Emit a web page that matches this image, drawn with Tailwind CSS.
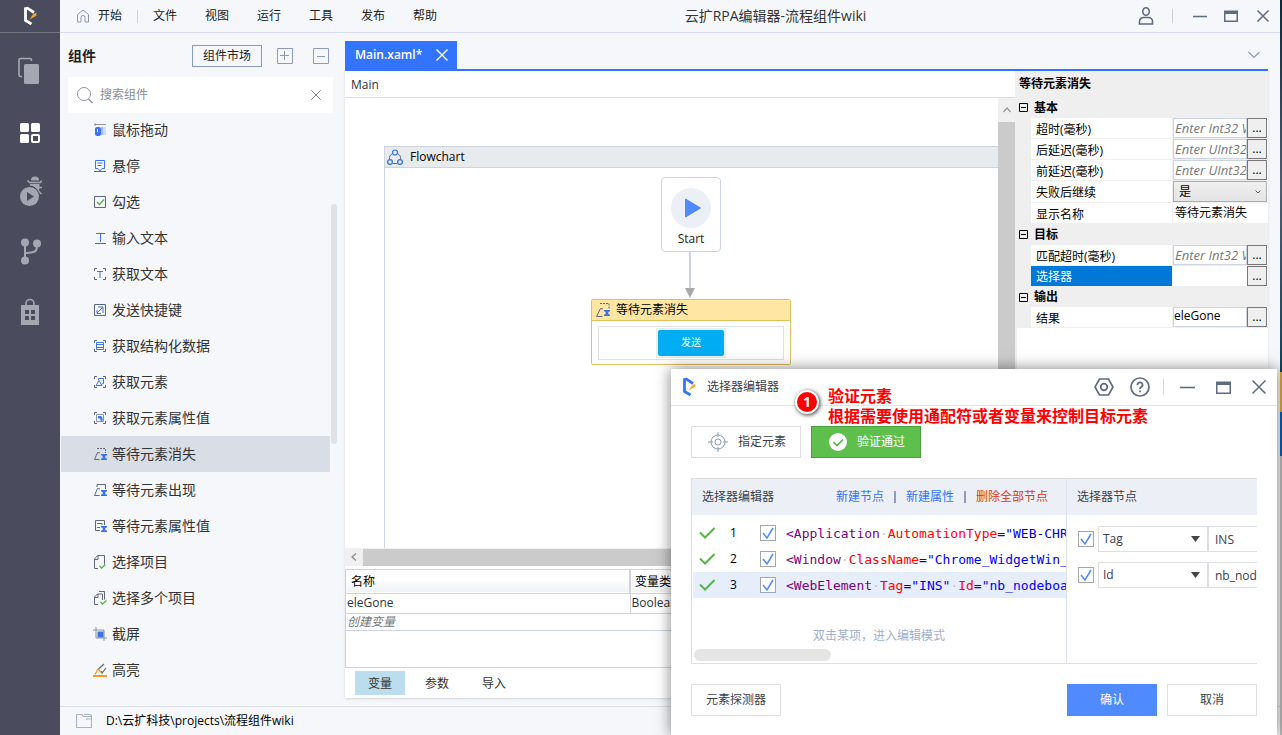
<!DOCTYPE html>
<html lang="zh-CN">
<head>
<meta charset="utf-8">
<title>云扩RPA编辑器-流程组件wiki</title>
<script src="https://cdn.jsdelivr.net/npm/@tailwindcss/browser@4"></script>
</head>
<body class="relative flex h-screen overflow-hidden bg-[#f5f7fb] font-['Open_Sans','Noto_Sans_CJK_SC',sans-serif] text-xs text-[#222]">

<!-- Shared symbols -->
<svg class="hidden">
  <symbol id="logo" viewBox="0 0 16 20"><path d="M12 6.500L5.500 2.200L3.500 2.600V14.500L9.500 18" fill="none" stroke="currentColor" stroke-width="2.800"/><path d="M14.300 6.500v3.300L7.500 13.500l3.500-5z" fill="#f6ab2f"/></symbol>
  <symbol id="close" viewBox="0 0 14 14"><path d="M1.500 1.500l11 11M12.500 1.500l-11 11" fill="none" stroke="currentColor"/></symbol>
  <symbol id="tick" viewBox="0 0 16 16"><path d="M3 8l4 5 6-10" fill="none" stroke="#4f8bff" stroke-width="1.500"/></symbol>
  <symbol id="ok" viewBox="0 0 16 12"><path d="M1 5.500l5 5L15.500 1" fill="none" stroke="#55b845" stroke-width="2"/></symbol>
  <symbol id="hourglass" viewBox="0 0 14 14"><path d="M8 7h6v1.500h-1l-1 1.500 1 1.500h1V13H8v-1.500h1l1-1.500-1-1.500H8z" fill="#3c74e8"/></symbol>
  <symbol id="corners" viewBox="0 0 14 14"><path d="M1.500 4V1.500H4M10 1.500h2.500V4M12.500 10v2.500H10M4 12.500H1.500V10" fill="none" stroke="#5d6880"/></symbol>
</svg>

<nav class="flex w-[60px] shrink-0 flex-col bg-[#4a4c5e] text-[#a4a7b1]" aria-label="侧栏">
  <div class="flex h-[33px] items-center justify-center border-b border-[#72747f] text-white">
    <svg class="h-5 w-4"><use href="#logo"/></svg>
  </div>
  <div class="flex flex-col pt-2">
    <button class="flex h-[60px] items-center justify-center" aria-label="文件"><svg class="h-7 w-6" viewBox="0 0 24 28"><path d="M4 19.500H2.500a1.500 1.500 0 0 1-1.500-1.500V3a1.500 1.500 0 0 1 1.500-1.500H12A1.500 1.500 0 0 1 13.500 3v1" fill="none" stroke="currentColor" stroke-width="1.600"/><rect x="6" y="7" width="15" height="20" rx="1.500" fill="currentColor"/></svg></button>
    <button class="flex h-[60px] items-center justify-center pt-1 text-white" aria-label="组件"><svg class="size-5" viewBox="0 0 20 20"><rect width="9" height="9" rx="1.500" fill="currentColor"/><rect x="11" width="9" height="9" rx="1.500" fill="currentColor"/><rect y="11" width="9" height="9" rx="1.500" fill="currentColor"/><rect x="12" y="12" width="7" height="7" rx="1" fill="none" stroke="currentColor" stroke-width="2"/></svg></button>
    <button class="flex h-[60px] items-center justify-center" aria-label="调试"><svg class="h-[30px] w-6" viewBox="0 0 24 30"><path d="M13 4.500a4 4 0 0 1 8 0z" fill="currentColor"/><path d="M9.500 4.500l2 2h11l1-2" fill="none" stroke="currentColor" stroke-width="1.600"/><path d="M12 8h9.500c0 4 0 7-1.500 9.500C19.500 13 16 10 12 9.500z" fill="currentColor"/><path d="M20 11.500h4M20 14.500l3.500 3.500" fill="none" stroke="currentColor" stroke-width="1.500"/><circle cx="11.500" cy="20.500" r="10.500" fill="#4a4c5e"/><circle cx="11.500" cy="20.500" r="9.500" fill="currentColor"/><path d="M9 16v9l7-4.500z" fill="#4a4c5e"/></svg></button>
    <button class="flex h-[60px] items-center justify-center" aria-label="版本"><svg class="h-7 w-6" viewBox="0 0 24 28"><g fill="currentColor"><circle cx="7" cy="5.500" r="4"/><circle cx="19" cy="6.500" r="4"/><circle cx="7" cy="23.500" r="4"/></g><path d="M7 5v18M7 16c6-1 12 1 12-7" fill="none" stroke="currentColor" stroke-width="2"/></svg></button>
    <button class="flex h-[60px] items-center justify-center pt-[2px]" aria-label="市场"><svg class="h-7 w-5" viewBox="0 0 20 28"><path d="M6 8V5.500a4 4 0 0 1 8 0V8" fill="none" stroke="currentColor" stroke-width="1.600"/><path fill="currentColor" fill-rule="evenodd" d="M1 7h18v20H1zM5 12v4h4v-4zM11 12v4h4v-4zM5 18v4h4v-4zM11 18v4h4v-4z"/></svg></button>
  </div>
</nav>

<div class="flex min-w-0 flex-1 flex-col">
  <header class="flex h-[33px] shrink-0 items-center border-b border-[#d8dde8] pl-4 pr-[10px]">
    <svg class="mr-2 size-[14px] text-[#8795b5]" viewBox="0 0 14 14"><path d="M1.500 13V5.500L7 1l5.500 4.500V13H9V8.500a2 2 0 0 0-4 0V13z" fill="none" stroke="currentColor"/></svg>
    <button class="pr-[15px]">开始</button>
    <span class="h-[13px] w-px bg-[#d0d3da]"></span>
    <div class="flex gap-7 pl-[15px]"><button>文件</button><button>视图</button><button>运行</button><button>工具</button><button>发布</button><button>帮助</button></div>
    <h1 class="flex-1 text-center text-sm text-[#333]">云扩RPA编辑器-流程组件wiki</h1>
    <div class="flex items-center pl-6 text-[#5f6b82]">
      <button aria-label="用户"><svg class="h-[18px] w-4" viewBox="0 0 16 18"><ellipse cx="8" cy="4.500" rx="3.200" ry="3.700" fill="none" stroke="currentColor" stroke-width="1.600"/><path d="M1.500 17v-2.500a4 4 0 0 1 4-4h5a4 4 0 0 1 4 4V17z" fill="none" stroke="currentColor" stroke-width="1.600"/></svg></button>
      <span class="ml-[18px] mr-5 h-[14px] w-px bg-[#cfd3db]"></span>
      <button aria-label="最小化"><svg class="size-[14px]" viewBox="0 0 14 14"><path d="M0 7.500h14" stroke="currentColor" stroke-width="1.500"/></svg></button>
      <button class="ml-[17px]" aria-label="最大化"><svg class="size-[14px]" viewBox="0 0 14 14"><path d="M0 1.500h14v11.500H0zM1.500 5v6.500h11V5z" fill="currentColor" fill-rule="evenodd"/></svg></button>
      <button class="ml-[18px]" aria-label="关闭"><svg class="size-[14px]" viewBox="0 0 14 14"><path d="M1.500 1.500l11 11M12.500 1.500l-11 11" fill="none" stroke="currentColor" stroke-width="1.500"/></svg></button>
    </div>
  </header>

  <div class="flex min-h-0 flex-1">
    <!-- Component library -->
    <aside class="flex w-[285px] shrink-0 flex-col pt-3">
      <div class="flex h-[22px] items-center pl-2 pr-4">
        <h2 class="flex-1 text-sm font-bold">组件</h2>
        <button class="h-[22px] w-[70px] border border-[#8b9bbd]">组件市场</button>
        <button class="ml-[15px] text-[#8b9bbd]" aria-label="展开"><svg class="size-4" viewBox="0 0 16 16"><path d="M.5.5h15v15H.5zM7.500 3v9M3 7.500h9" fill="none" stroke="currentColor"/></svg></button>
        <button class="ml-5 text-[#8b9bbd]" aria-label="折叠"><svg class="size-4" viewBox="0 0 16 16"><path d="M.5.5h15v15H.5zM4 8.500h8" fill="none" stroke="currentColor"/></svg></button>
      </div>
      <label class="ml-2 mr-3 mt-[10px] flex h-9 shrink-0 items-center bg-white px-2 text-[#8f949e]">
        <svg class="size-[18px]" viewBox="0 0 18 18"><circle cx="8" cy="8" r="6.500" fill="none" stroke="currentColor"/><path d="M12.500 13l4 4" stroke="currentColor" stroke-width="1.500"/></svg>
        <input class="ml-[6px] min-w-0 flex-1 outline-none placeholder:text-[#8a8d93]" placeholder="搜索组件" aria-label="搜索组件">
        <svg class="mr-[3px] size-3 text-[#6b7486]"><use href="#close"/></svg>
      </label>
      <div class="flex min-h-0 flex-1">
        <ul class="mx-px flex-1 overflow-hidden text-sm text-[#333]">
          <li class="-mt-px flex h-9 items-center gap-[5px] pl-8"><svg class="size-[14px]" viewBox="0 0 14 14"><path d="M2 1.500h11M2 0v3" stroke="#8a93a6"/><rect x="2" y="4" width="6" height="9" rx="2" fill="#3c74e8"/><path d="M4.500 6v3" stroke="#fff"/><path d="M8 4h2.500v8H8z" fill="#9db8f2"/><path d="M10.500 4H13v8h-2.500z" fill="#d0dcf8"/></svg>鼠标拖动</li>
          <li class="flex h-9 items-center gap-[5px] pl-8"><svg class="size-[14px]" viewBox="0 0 14 14"><path d="M2.500 1.500h9v8H9L7 12 5 9.500H2.500zM4.500 4h5M4.500 6.500h4" fill="none" stroke="#3c74e8"/><path d="M1 12.500h12" stroke="#5d6880"/></svg>悬停</li>
          <li class="flex h-9 items-center gap-[5px] pl-8"><svg class="size-[14px]" viewBox="0 0 14 14"><path d="M1.500 1.500h11v11h-11z" fill="none" stroke="#5d6880"/><path d="M4 7l2.500 2.500L11 4.500" fill="none" stroke="#55b845" stroke-width="1.300"/></svg>勾选</li>
          <li class="flex h-9 items-center gap-[5px] pl-8"><svg class="size-[14px]" viewBox="0 0 14 14"><path d="M3 2.500h9M7.500 2.500V11" stroke="#3c74e8"/><path d="M2 12.500h11" stroke="#5d6880"/></svg>输入文本</li>
          <li class="flex h-9 items-center gap-[5px] pl-8"><svg class="size-[14px]" viewBox="0 0 14 14"><use href="#corners"/><path d="M4 4.500h6M7 4.500V11" stroke="#3c74e8"/></svg>获取文本</li>
          <li class="flex h-9 items-center gap-[5px] pl-8"><svg class="size-[14px]" viewBox="0 0 14 14"><path d="M1.500 1.500h11v11h-11z" fill="none" stroke="#5d6880"/><path d="M5 4h5v6M10 4L4 10M4 7v3.500h4" fill="none" stroke="#3c74e8"/></svg>发送快捷键</li>
          <li class="flex h-9 items-center gap-[5px] pl-8"><svg class="size-[14px]" viewBox="0 0 14 14"><use href="#corners"/><path d="M3.500 3.500h7v7h-7zM3.500 5.500h7M3.500 8.500h7" fill="none" stroke="#3c74e8"/></svg>获取结构化数据</li>
          <li class="flex h-9 items-center gap-[5px] pl-8"><svg class="size-[14px]" viewBox="0 0 14 14"><use href="#corners"/><path d="M5.500 5V3.500h5v5L9 9M3 10.500l3-5 3 5z" fill="none" stroke="#3c74e8"/></svg>获取元素</li>
          <li class="flex h-9 items-center gap-[5px] pl-8"><svg class="size-[14px]" viewBox="0 0 14 14"><use href="#corners"/><path d="M3.500 3.500h7v7h-7z" fill="none" stroke="#8a93a6"/><path d="M5 5h3l1.500 2v3H8L7 7.500H5z" fill="#3c74e8"/></svg>获取元素属性值</li>
          <li class="flex h-9 items-center gap-[5px] bg-[#d9dde6] pl-8"><svg class="size-[14px]" viewBox="0 0 14 14"><path d="M4 1.500h8.500V6" fill="none" stroke="#5d6880" stroke-dasharray="2 1"/><path d="M6.500 12.500h-5l3-7L7 6" fill="none" stroke="#5d6880"/><use href="#hourglass"/></svg>等待元素消失</li>
          <li class="flex h-9 items-center gap-[5px] pl-8"><svg class="size-[14px]" viewBox="0 0 14 14"><path d="M4 4V1.500h8.500V6M6.500 12.500h-5l3-7L7 6" fill="none" stroke="#5d6880"/><use href="#hourglass"/></svg>等待元素出现</li>
          <li class="flex h-9 items-center gap-[5px] pl-8"><svg class="size-[14px]" viewBox="0 0 14 14"><path d="M7 11.500H2.500v-10h9V6" fill="none" stroke="#5d6880"/><path d="M4 4.500h5V6M4 8.500h3" fill="none" stroke="#3c74e8"/><use href="#hourglass"/></svg>等待元素属性值</li>
          <li class="flex h-9 items-center gap-[5px] pl-8"><svg class="size-[14px]" viewBox="0 0 14 14"><path d="M5 13.500H1.500V4l3-3.500h7v9M1.500 4.500h3.500V1" fill="none" stroke="#5d6880"/><path d="M6.500 11l2 2L12.500 9.500" fill="none" stroke="#55b845" stroke-width="1.300"/></svg>选择项目</li>
          <li class="flex h-9 items-center gap-[5px] pl-8"><svg class="size-[14px]" viewBox="0 0 14 14"><path d="M5 13.500H1.500V6l3-3h5v6M1.500 6.500H5V3M6 .5h5.500v8" fill="none" stroke="#5d6880"/><path d="M7.500 11l2 2L13.500 9.500" fill="none" stroke="#55b845" stroke-width="1.300"/></svg>选择多个项目</li>
          <li class="flex h-9 items-center gap-[5px] pl-8"><svg class="size-[14px]" viewBox="0 0 14 14"><path d="M0 3h11v11M3 0v11h11" fill="none" stroke="#8a93a6"/><path d="M4.500 4.500h6v6h-6z" fill="#3c74e8"/></svg>截屏</li>
          <li class="flex h-9 items-center gap-[5px] pl-8"><svg class="size-[14px]" viewBox="0 0 14 14"><path d="M0 13h14" stroke="#f0a020" stroke-width="2"/><path d="M2 11.500l3-5.500 4.500 5" fill="none" stroke="#f0a020" stroke-width="1.300"/><path d="M5.500 6l5.500-5M8 8.500l1.500 1L13 5" fill="none" stroke="#5d6880" stroke-width="1.200"/></svg>高亮</li>
        </ul>
        <div class="mr-[8px] mt-[91px] h-60 w-[6px] shrink-0 rounded-full bg-[#dfe1e4]"></div>
      </div>
    </aside>

    <!-- Editor -->
    <main class="mb-2 mr-3 flex min-w-0 flex-1 flex-col pt-2">
      <div class="flex h-7 shrink-0 items-center justify-between">
        <div class="flex h-7 w-28 items-center justify-between bg-[#3374ff] pl-[10px] pr-2 font-semibold text-white">Main.xaml*<button aria-label="关闭标签"><svg class="size-[14px]" viewBox="0 0 14 14"><path d="M1.500 1.500l11 11M12.500 1.500l-11 11" fill="none" stroke="currentColor" stroke-width="1.400"/></svg></button></div>
        <button class="pr-2 text-[#8b9bbd]" aria-label="更多标签"><svg class="h-2 w-3" viewBox="0 0 12 8"><path d="M.5 1L6 6.500 11.500 1" fill="none" stroke="currentColor" stroke-width="1.200"/></svg></button>
      </div>
      <div class="flex min-h-0 flex-1 border-t-2 border-[#3374ff] bg-white shadow-sm">
        <section class="flex min-w-0 flex-1 flex-col">
          <div class="flex h-[27px] shrink-0 items-center border-b border-[#d8dce8] pl-[6px] pt-px text-[#2c3240]">Main</div>
          <div class="flex min-h-0 flex-1">
            <div class="flex min-w-0 flex-1 flex-col pl-[39px] pt-12">
              <div class="flex min-h-0 flex-1 flex-col border-l border-t border-[#cdd3e0]">
                <div class="flex h-[21px] shrink-0 items-center gap-[7px] border-b border-[#cdd3e0] bg-[#e7ebee] pb-px pl-[2px] text-black">
                  <svg class="size-4" viewBox="0 0 16 16"><path d="M5.500 4.500C3 6 2 8 2.500 10M10.500 4.500C13 6 14 8 13.500 10M6 14.500h4" fill="none" stroke="#5d6880"/><g fill="#e7ebee" stroke="#2c74e0" stroke-width="1.200"><circle cx="8" cy="3.500" r="2.500"/><circle cx="3" cy="13" r="2.400"/><circle cx="13" cy="13" r="2.400"/></g></svg>Flowchart
                </div>
                <div class="relative min-h-0 flex-1">
                  <div class="absolute left-[276px] top-[9px] flex h-[75px] w-[60px] flex-col items-center rounded border border-[#cdd3e0] bg-white pt-[10px]">
                    <svg class="size-10" viewBox="0 0 40 40"><circle cx="20" cy="20" r="20" fill="#eceff5"/><path d="M14.500 11v18L29.500 20z" fill="#4f8bff" stroke="#4f8bff" stroke-linejoin="round"/></svg>
                    <span class="leading-[22px]">Start</span>
                  </div>
                  <svg class="absolute left-[300px] top-[84px] h-[47px] w-[10px]" viewBox="0 0 10 47"><path d="M5 0v38" stroke="#cdd3e0" stroke-width="2"/><path d="M0 36h10L5 46z" fill="#a8a8a8"/></svg>
                  <div class="absolute left-[206px] top-[131px] w-[200px] rounded-xs border border-[#e5c15c] bg-white">
                    <div class="flex h-[21px] items-center gap-[6px] border-b border-[#e5c15c] bg-[#ffe6a2] pb-px pl-1 text-black"><svg class="size-[14px]" viewBox="0 0 14 14"><path d="M4 .5h9V6" fill="none" stroke="#5d6880" stroke-dasharray="2 1"/><path d="M6.500 13.500H.5l4-8L7 6" fill="none" stroke="#5d6880"/><use href="#hourglass"/></svg>等待元素消失</div>
                    <div class="mx-[6px] mb-1 mt-[5px] flex h-[34px] items-center justify-center border border-[#dfe1e6]"><span class="border-2 border-[#e6f0f2]"><span class="flex h-[26px] w-[66px] items-center justify-center rounded-xs bg-[#00adf2] text-[10px] text-white">发送</span></span></div>
                  </div>
                </div>
              </div>
            </div>
            <div class="flex w-[17px] shrink-0 flex-col bg-[#f0f0f0]">
              <div class="flex h-6 items-center justify-center"><svg class="h-[6px] w-2" viewBox="0 0 8 6"><path d="M.5 5L4 1l3.500 4" fill="none" stroke="#999" stroke-width="1.200"/></svg></div>
              <div class="flex-1 bg-[#cbcbcb]"></div>
            </div>
          </div>
          <div class="flex h-[18px] shrink-0 items-center bg-[#f0f0f0]">
            <div class="flex w-[18px] justify-center"><svg class="h-2 w-[6px]" viewBox="0 0 6 8"><path d="M5 .5L1 4l4 3.500" fill="none" stroke="#888" stroke-width="1.200"/></svg></div>
            <div class="h-[17px] flex-1 bg-[#cbcbcb]"></div>
          </div>
          <div class="mt-[3px] h-[99px] shrink-0 border border-[#cdd3e0]">
            <table class="w-full table-fixed text-left">
              <thead><tr class="h-[23px] border-b border-[#cdd3e0] bg-linear-to-b from-white from-40% to-[#f0f2f4] text-black"><th class="w-[284px] border-r-2 border-[#cdd3e0] pl-[5px] pt-px font-normal">名称</th><th class="pl-1 pt-px font-normal">变量类型</th></tr></thead>
              <tbody>
                <tr class="h-[20px] border-b border-[#cdd3e0] text-[#2c3240]"><td class="border-r border-[#cdd3e0] pl-px">eleGone</td><td class="pl-px">Boolean</td></tr>
                <tr class="h-[17px] border-b border-[#cdd3e0] leading-4 text-[#777]"><td class="pl-px italic" colspan="2">创建变量</td></tr>
              </tbody>
            </table>
          </div>
          <div class="flex h-[30px] shrink-0 items-center gap-[7px] px-[10px] text-[#333]">
            <button class="h-6 w-[50px] bg-[#bbdded] pt-px">变量</button><button class="h-6 w-[50px] pt-px">参数</button><button class="h-6 w-[50px] pt-px">导入</button>
          </div>
        </section>

        <!-- Properties -->
        <section class="flex w-[253px] shrink-0 flex-col border-l-2 border-[#efefef] text-black">
          <h3 class="flex h-[26px] shrink-0 items-center bg-[#efefef] pb-px pl-[2px] font-bold">等待元素消失</h3>
          <div class="flex h-[21px] shrink-0 items-center gap-[6px] bg-[#efefef] pl-[2px] font-bold"><svg class="size-[9px]" viewBox="0 0 9 9"><path d="M.5.5h8v8h-8zM2 4.500h5" fill="none" stroke="#000"/></svg>基本</div>
          <div class="flex h-[21px] shrink-0 border-b border-l-[14px] border-[#efefef]"><label for="p1" class="w-[142px] border-r border-[#efefef] pl-[5px] leading-6">超时(毫秒)</label><input id="p1" class="w-[74px] border border-[#cdd3e0] pl-px text-[13px] italic leading-4 placeholder:text-[#777]" placeholder="Enter Int32 VB"><button class="w-5 border border-[#777] bg-[#efefef] leading-4">...</button></div>
          <div class="flex h-[21px] shrink-0 border-b border-l-[14px] border-[#efefef]"><label for="p2" class="w-[142px] border-r border-[#efefef] pl-[5px] leading-6">后延迟(毫秒)</label><input id="p2" class="w-[74px] border border-[#cdd3e0] pl-px text-[13px] italic leading-4 placeholder:text-[#777]" placeholder="Enter UInt32 VB"><button class="w-5 border border-[#777] bg-[#efefef] leading-4">...</button></div>
          <div class="flex h-[21px] shrink-0 border-b border-l-[14px] border-[#efefef]"><label for="p3" class="w-[142px] border-r border-[#efefef] pl-[5px] leading-6">前延迟(毫秒)</label><input id="p3" class="w-[74px] border border-[#cdd3e0] pl-px text-[13px] italic leading-4 placeholder:text-[#777]" placeholder="Enter UInt32 VB"><button class="w-5 border border-[#777] bg-[#efefef] leading-4">...</button></div>
          <div class="flex h-[22px] shrink-0 border-b border-l-[14px] border-[#efefef]"><label for="p4" class="w-[142px] border-r border-[#efefef] pl-[5px] leading-6">失败后继续</label><div class="grid w-[94px] items-center"><select id="p4" class="col-start-1 row-start-1 h-[21px] appearance-none border border-[#acacac] bg-linear-to-b from-[#efefef] to-[#e4e4e4] pl-[5px]"><option>是</option></select><svg class="pointer-events-none col-start-1 row-start-1 mr-[6px] h-1 w-[6px] justify-self-end" viewBox="0 0 6 4"><path d="M.5.5L3 3 5.500.5" fill="none" stroke="#555"/></svg></div></div>
          <div class="flex h-[21px] shrink-0 border-b border-l-[14px] border-[#efefef]"><label for="p5" class="w-[142px] border-r border-[#efefef] pl-[5px] leading-6">显示名称</label><input id="p5" class="w-[94px] pl-[2px] leading-4" value="等待元素消失"></div>
          <div class="flex h-[21px] shrink-0 items-center gap-[6px] bg-[#efefef] pl-[2px] font-bold"><svg class="size-[9px]" viewBox="0 0 9 9"><path d="M.5.5h8v8h-8zM2 4.500h5" fill="none" stroke="#000"/></svg>目标</div>
          <div class="flex h-[21px] shrink-0 border-b border-l-[14px] border-[#efefef]"><label for="p6" class="w-[142px] border-r border-[#efefef] pl-[5px] leading-6">匹配超时(毫秒)</label><input id="p6" class="w-[74px] border border-[#cdd3e0] pl-px text-[13px] italic leading-4 placeholder:text-[#777]" placeholder="Enter Int32 VB"><button class="w-5 border border-[#777] bg-[#efefef] leading-4">...</button></div>
          <div class="flex h-[21px] shrink-0 border-b border-l-[14px] border-[#efefef]"><label for="p7" class="w-[142px] border-r border-[#efefef] bg-[#0078d7] pl-[5px] leading-[22px] text-white">选择器</label><input id="p7" class="w-[74px] pl-px"><button class="w-5 border border-[#777] bg-[#efefef] leading-4">...</button></div>
          <div class="flex h-5 shrink-0 items-center gap-[6px] bg-[#efefef] pl-[2px] font-bold"><svg class="size-[9px]" viewBox="0 0 9 9"><path d="M.5.5h8v8h-8zM2 4.500h5" fill="none" stroke="#000"/></svg>输出</div>
          <div class="flex h-[21px] shrink-0 border-b border-l-[14px] border-[#efefef]"><label for="p8" class="w-[142px] border-r border-[#efefef] pl-[5px] leading-6">结果</label><input id="p8" class="w-[74px] border border-[#cdd3e0] pb-[2px] leading-4" value="eleGone"><button class="w-5 border border-[#777] bg-[#efefef] leading-4">...</button></div>
        </section>
      </div>
    </main>
  </div>

  <footer class="flex h-[29px] shrink-0 items-center border-t border-[#dcdfe6] pl-4 text-black">
    <svg class="mr-[14px] size-4" viewBox="0 0 16 16"><path d="M.5 14.500v-13h5.500l1.500 2h8v11zM8 1.500h5.500a2 2 0 0 1 2 2V6H10" fill="none" stroke="#a9b3c6" stroke-width="1.200"/></svg>D:\云扩科技\projects\流程组件wiki
  </footer>
</div>

<!-- Desktop visible beside the window -->
<div class="flex w-[2px] shrink-0 flex-col">
  <div class="h-[372px] bg-linear-to-b from-[#0b2838] via-[#4f5c6c] to-[#0c4257]"></div><div class="h-[40px] bg-[#d9a846]"></div><div class="h-11 bg-[#0c5cb5]"></div><div class="flex-1 bg-[#bdbdbd]"></div>
</div>

<!-- Selector editor dialog -->
<div role="dialog" aria-label="选择器编辑器" class="absolute bottom-0 left-[671px] right-[5px] top-[369px] flex flex-col bg-white text-[#3b404c] shadow-[0_0_14px_rgba(0,0,0,0.5)]">
  <div class="flex h-[37px] shrink-0 items-center border-b border-[#e0e4ee] pl-[10px] pr-[10px] text-[#5f6b82]">
    <svg class="mr-[10px] h-5 w-4 text-[#3374ff]"><use href="#logo"/></svg>
    <h2 class="flex-1 text-[#3b404c]">选择器编辑器</h2>
    <button aria-label="设置"><svg class="size-5" viewBox="0 0 20 20"><path d="M5.500 2h9l4.500 8-4.500 8h-9L1 10z" fill="none" stroke="currentColor" stroke-width="1.700"/><circle cx="10" cy="10" r="3.300" fill="none" stroke="currentColor" stroke-width="1.700"/></svg></button>
    <button class="ml-4" aria-label="帮助"><svg class="size-5" viewBox="0 0 20 20"><circle cx="10" cy="10" r="9" fill="none" stroke="currentColor" stroke-width="1.700"/><path d="M7.500 8a2.500 2.500 0 1 1 3.700 2.100c-.8.5-1.200.8-1.200 1.900M10 13.500v1.800" fill="none" stroke="currentColor" stroke-width="1.800"/></svg></button>
    <span class="ml-[13px] mr-4 h-4 w-px bg-[#d5d9e0]"></span>
    <button aria-label="最小化"><svg class="h-4 w-[15px]" viewBox="0 0 15 16"><path d="M0 8.500h15" stroke="currentColor" stroke-width="1.600"/></svg></button>
    <button class="ml-[21px]" aria-label="最大化"><svg class="h-4 w-[15px]" viewBox="0 0 15 16"><path d="M0 2.500h15V15H0zM1.500 6v7.500h12V6z" fill="currentColor" fill-rule="evenodd"/></svg></button>
    <button class="ml-5" aria-label="关闭"><svg class="size-4" viewBox="0 0 16 16"><path d="M1.500 1.500l13 13M14.500 1.500l-13 13" fill="none" stroke="currentColor" stroke-width="1.500"/></svg></button>
  </div>
  <div class="flex flex-1 flex-col px-5 pt-5">
    <div class="flex gap-[10px]">
      <button class="flex h-8 w-[110px] items-center justify-center gap-[10px] border border-[#dedfe2] pl-[2px]"><svg class="size-5 text-[#8b9bbd]" viewBox="0 0 20 20"><circle cx="10" cy="10" r="7" fill="none" stroke="currentColor"/><circle cx="10" cy="10" r="3" fill="none" stroke="currentColor"/><path d="M10 0v5M10 15v5M0 10h5M15 10h5" stroke="currentColor"/></svg>指定元素</button>
      <button class="flex h-8 w-[110px] items-center justify-center gap-[10px] border border-[#46a13a] bg-[#5fbf4d] pl-[2px] text-white"><svg class="size-[18px]" viewBox="0 0 18 18"><circle cx="9" cy="9" r="9" fill="#fff"/><path d="M4.500 9l3.500 3.500L14 6.500" fill="none" stroke="#55b845" stroke-width="1.600"/></svg>验证通过</button>
    </div>
    <div class="mt-5 flex h-[186px] border-y border-l border-[#dedfe2]">
      <section class="flex w-[375px] shrink-0 flex-col border-r border-[#dbe2f0]">
        <div class="flex h-9 shrink-0 items-center bg-[#eceff5] pl-[10px] pr-[18px]">
          <h3 class="flex-1">选择器编辑器</h3>
          <button class="text-[#3374ff]">新建节点</button><span class="mx-[10px] h-3 w-[2px] bg-[#8f9bb8]"></span><button class="text-[#3374ff]">新建属性</button><span class="mx-[10px] h-3 w-[2px] bg-[#8f9bb8]"></span><button class="text-[#e03a10]">删除全部节点</button>
        </div>
        <div class="flex flex-col pl-px pt-[5px] text-[13px] text-black">
          <div class="flex h-[26px] items-center pl-[6px]"><svg class="h-3 w-4"><use href="#ok"/></svg><span class="ml-[15px] w-5 text-xs">1</span><span class="ml-[10px] grid size-4 shrink-0"><input type="checkbox" checked aria-label="节点 1" class="col-start-1 row-start-1 size-4 appearance-none border border-[#a3a6ad]"><svg class="pointer-events-none col-start-1 row-start-1 size-4"><use href="#tick"/></svg></span><code class="ml-[10px] flex-1 overflow-hidden whitespace-nowrap pt-px font-['DejaVu_Sans_Mono',monospace] text-[#0000f0]"><span class="text-[#800080]">&lt;Application</span><span class="text-[#c8c8c8]">·</span><span class="text-[#f00]">AutomationType</span>="WEB-CHR</code></div>
          <div class="flex h-[26px] items-center pl-[6px]"><svg class="h-3 w-4"><use href="#ok"/></svg><span class="ml-[15px] w-5 text-xs">2</span><span class="ml-[10px] grid size-4 shrink-0"><input type="checkbox" checked aria-label="节点 2" class="col-start-1 row-start-1 size-4 appearance-none border border-[#a3a6ad]"><svg class="pointer-events-none col-start-1 row-start-1 size-4"><use href="#tick"/></svg></span><code class="ml-[10px] flex-1 overflow-hidden whitespace-nowrap pt-px font-['DejaVu_Sans_Mono',monospace] text-[#0000f0]"><span class="text-[#800080]">&lt;Window</span><span class="text-[#c8c8c8]">·</span><span class="text-[#f00]">ClassName</span>="Chrome_WidgetWin_</code></div>
          <div class="flex h-[26px] items-center bg-[#e6edfb] pl-[6px]"><svg class="h-3 w-4"><use href="#ok"/></svg><span class="ml-[15px] w-5 text-xs">3</span><span class="ml-[10px] grid size-4 shrink-0"><input type="checkbox" checked aria-label="节点 3" class="col-start-1 row-start-1 size-4 appearance-none border border-[#a3a6ad] bg-white"><svg class="pointer-events-none col-start-1 row-start-1 size-4"><use href="#tick"/></svg></span><code class="ml-[10px] flex-1 overflow-hidden whitespace-nowrap pt-px font-['DejaVu_Sans_Mono',monospace] text-[#0000f0]"><span class="text-[#800080]">&lt;WebElement</span><span class="text-[#c8c8c8]">·</span><span class="text-[#f00]">Tag</span>="INS"<span class="text-[#c8c8c8]">·</span><span class="text-[#f00]">Id</span>="nb_nodeboa</code></div>
        </div>
        <p class="mt-auto pb-[5px] text-center text-[#a3b0ca]">双击某项，进入编辑模式</p>
        <div class="mb-[2px] ml-[2px] h-3 w-[137px] rounded-full bg-[#e5e5e5]"></div>
      </section>
      <section class="flex min-w-0 flex-1 flex-col overflow-hidden">
        <h3 class="flex h-9 shrink-0 items-center bg-[#eceff5] pl-[10px]">选择器节点</h3>
        <div class="flex flex-col gap-[10px] pl-[11px] pt-[11px]">
          <div class="flex h-[26px] items-center"><span class="mr-1 grid size-4 shrink-0"><input type="checkbox" checked aria-label="Tag" class="col-start-1 row-start-1 size-4 appearance-none border border-[#a3a6ad]"><svg class="pointer-events-none col-start-1 row-start-1 size-4"><use href="#tick"/></svg></span><span class="grid w-[110px] shrink-0 items-center"><select aria-label="属性 1" class="col-start-1 row-start-1 h-[26px] appearance-none border border-[#dedfe2] pl-1"><option>Tag</option></select><svg class="pointer-events-none col-start-1 row-start-1 mr-2 h-[6px] w-[9px] justify-self-end" viewBox="0 0 9 6"><path d="M0 0h9L4.500 6z" fill="#444"/></svg></span><input aria-label="值 1" class="h-[26px] w-0 flex-1 border-y border-l border-[#dedfe2] pl-[6px]" value="INS"></div>
          <div class="flex h-[26px] items-center"><span class="mr-1 grid size-4 shrink-0"><input type="checkbox" checked aria-label="Id" class="col-start-1 row-start-1 size-4 appearance-none border border-[#a3a6ad]"><svg class="pointer-events-none col-start-1 row-start-1 size-4"><use href="#tick"/></svg></span><span class="grid w-[110px] shrink-0 items-center"><select aria-label="属性 2" class="col-start-1 row-start-1 h-[26px] appearance-none border border-[#dedfe2] pl-1"><option>Id</option></select><svg class="pointer-events-none col-start-1 row-start-1 mr-2 h-[6px] w-[9px] justify-self-end" viewBox="0 0 9 6"><path d="M0 0h9L4.500 6z" fill="#444"/></svg></span><input aria-label="值 2" class="h-[26px] w-0 flex-1 border-y border-l border-[#dedfe2] pl-[6px]" value="nb_nodeboard"></div>
        </div>
      </section>
    </div>
    <div class="mt-5 flex gap-[10px]">
      <button class="mr-auto h-8 w-[90px] border border-[#dedfe2]">元素探测器</button>
      <button class="h-8 w-[90px] bg-[#4f8bff] text-white">确认</button>
      <button class="h-8 w-[90px] border border-[#dedfe2]">取消</button>
    </div>
  </div>

  <!-- Step callout laid over the dialog -->
  <div class="pointer-events-none absolute left-[124px] top-[17px] flex gap-[9px] text-base font-bold leading-5 text-[#f00]">
    <span class="mt-1 flex size-6 items-center justify-center rounded-full border-2 border-white bg-[#f00] text-sm text-white shadow-[1px_1px_4px_rgba(0,0,0,0.8)]">1</span>
    <p class="whitespace-nowrap">验证元素<br>根据需要使用通配符或者变量来控制目标元素</p>
  </div>
</div>
</body>
</html>
